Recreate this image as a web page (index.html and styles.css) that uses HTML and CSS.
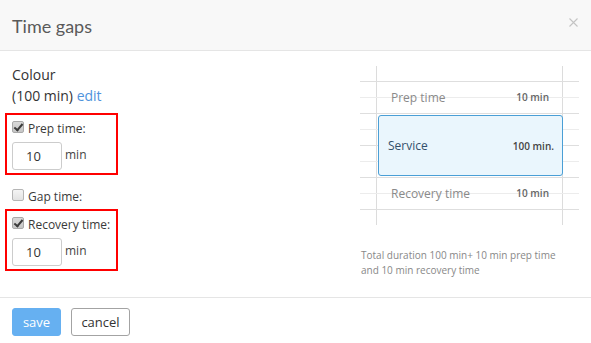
FILE: index.html
```html
<!DOCTYPE html>
<html lang="en">
<head>
<meta charset="utf-8">
<title>Time gaps</title>
<link rel="stylesheet" href="styles.css">
</head>
<body>
<div class="modal">
  <header class="modal-header">
    <h1 class="modal-title">Time gaps</h1>
    <button class="close" type="button" aria-label="Close">
      <svg width="9" height="9" viewBox="0 0 9 9"><path d="M0.5 0.5 L8.5 8.5 M8.5 0.5 L0.5 8.5" stroke="#c4c4c4" stroke-width="1.1" fill="none"/></svg>
    </button>
  </header>
  <div class="modal-body">
    <div class="form-col">
      <div class="colour">Colour</div>
      <div class="colour">(100 min) <a class="link" href="#">edit</a></div>

      <div class="group highlight">
        <label class="check-row"><input type="checkbox" class="cb" checked> Prep time:</label>
        <div class="num-row"><input class="num" type="text" value="10"><span class="unit">min</span></div>
      </div>

      <label class="check-row gap-row"><input type="checkbox" class="cb"> Gap time:</label>

      <div class="group highlight">
        <label class="check-row"><input type="checkbox" class="cb" checked> Recovery time:</label>
        <div class="num-row"><input class="num" type="text" value="10"><span class="unit">min</span></div>
      </div>
    </div>

    <div class="preview-col">
      <div class="timeline">
        <div class="slots">
          <div class="event gap-event"><span class="ev-name">Prep time</span><span class="ev-dur">10 min</span></div>
          <div class="event service"><span class="ev-name">Service</span><span class="ev-dur">100 min.</span></div>
          <div class="event gap-event"><span class="ev-name">Recovery time</span><span class="ev-dur">10 min</span></div>
        </div>
      </div>
      <p class="note">Total duration 100 min+ 10 min prep time<br>and 10 min recovery time</p>
    </div>
  </div>
  <footer class="modal-footer">
    <button class="btn btn-primary" type="button">save</button>
    <button class="btn btn-default" type="button">cancel</button>
  </footer>
</div>
</body>
</html>
```

FILE: styles.css
```css
* { box-sizing: border-box; }

html, body {
  margin: 0;
  padding: 0;
  background: #fff;
}

body {
  font-family: "Open Sans", "Liberation Sans", sans-serif;
  color: #333;
}

.modal {
  width: 591px;
  display: flex;
  flex-direction: column;
}

.modal-header {
  flex: none;
  height: 51px;
  background: #f8f8f8;
  border-bottom: 1px solid #e5e5e5;
  display: flex;
  align-items: center;
  justify-content: space-between;
  padding: 0 13px 0 12px;
}

.modal-title {
  margin: 0;
  font-family: Lato, "Open Sans", sans-serif;
  font-weight: 400;
  font-size: 18px;
  color: #5a5a5a;
  line-height: 20px;
  padding-top: 2px;
}

.close {
  border: 0;
  background: none;
  padding: 0;
  width: 9px;
  height: 9px;
  display: flex;
  margin-top: -5px;
}

.modal-body {
  display: flex;
  padding: 13px 12px 19px 12px;
  flex: none;
}

.form-col {
  flex: 1;
  display: flex;
  flex-direction: column;
  align-items: flex-start;
}

.colour {
  font-size: 14px;
  line-height: 21px;
  color: #333;
}

.link {
  color: #4f93dc;
  text-decoration: none;
}

.group {
  width: 113px;
  margin-left: -7px;
  padding: 4px 5px 3px 5px;
}

.highlight {
  border: 2px solid #f00;
}

.form-col .colour + .highlight {
  margin-top: 7px;
}

.check-row {
  display: flex;
  align-items: center;
  gap: 4px;
  height: 18px;
  font-size: 12px;
  color: #3a3a3a;
  white-space: nowrap;
}

.gap-row {
  margin: 12px 0 4px 0;
}

.cb {
  -webkit-appearance: none;
  appearance: none;
  margin: -2px 0 0 0;
  width: 12px;
  height: 12px;
  border: 1px solid #b5b5b5;
  border-radius: 2px;
  background: linear-gradient(#f4f4f4, #e2e2e2);
  position: relative;
  flex: none;
}

.cb:checked {
  background: linear-gradient(#d9d9d9, #c6c6c6);
  border-color: #a9a9a9;
}

.cb:checked::after {
  content: "";
  position: absolute;
  left: 3px;
  top: 0px;
  width: 3px;
  height: 7px;
  border-right: 2px solid #3b3b3b;
  border-bottom: 2px solid #3b3b3b;
  transform: rotate(40deg);
}

.num-row {
  display: flex;
  align-items: center;
  gap: 3px;
  margin-top: 5px;
}

.num {
  width: 50px;
  height: 28px;
  border: 1px solid #ccc;
  border-radius: 3px;
  padding: 0 0 0 13px;
  font-family: "Open Sans", sans-serif;
  font-size: 13px;
  color: #333;
  outline: none;
}

.unit {
  font-size: 12px;
  color: #444;
  margin-top: -3px;
}

.preview-col {
  width: 219px;
  flex: none;
  padding-top: 2px;
}

.timeline {
  height: 159px;
  padding: 15px 0 0 0;
  background:
    linear-gradient(#dcdcdc, #dcdcdc) 16px 0 / 1px 100% no-repeat,
    linear-gradient(#dcdcdc, #dcdcdc) 202px 0 / 1px 100% no-repeat;
}

.slots {
  height: 129px;
  padding: 0 17px 0 16px;
  background: repeating-linear-gradient(to bottom,
    #dedede 0, #dedede 1px,
    transparent 1px, transparent 16px,
    #ececec 16px, #ececec 17px,
    transparent 17px, transparent 32px);
}

.event {
  display: flex;
  justify-content: space-between;
  align-items: center;
  white-space: nowrap;
}

.gap-event {
  height: 32px;
  padding: 0 13px 0 15px;
}

.service {
  height: 61px;
  margin: 2px -1px 1px 2px;
  padding: 0 8px 0 9px;
  background: #eaf6fd;
  border: 1px solid #4a9fd6;
  border-radius: 3px;
}

.ev-name {
  font-size: 12px;
  color: #8a8a8a;
}

.service .ev-name {
  color: #34506b;
}

.ev-dur {
  font-size: 10px;
  font-weight: 600;
  color: #666;
}

.service .ev-dur {
  color: #444;
}

.note {
  margin: 23px 0 0 1px;
  font-size: 10px;
  line-height: 15px;
  color: #888;
}

.modal-footer {
  flex: none;
  border-top: 1px solid #e5e5e5;
  padding: 10px 12px 7px 12px;
  display: flex;
  gap: 10px;
}

.btn {
  height: 28px;
  border-radius: 3px;
  font-family: "Open Sans", sans-serif;
  font-size: 13px;
  padding: 0;
}

.btn-primary {
  width: 49px;
  background: #66b0f1;
  border: 1px solid #66b0f1;
  color: #fff;
}

.btn-default {
  width: 59px;
  background: #fff;
  border: 1px solid #a3a3a3;
  color: #333;
}
```
